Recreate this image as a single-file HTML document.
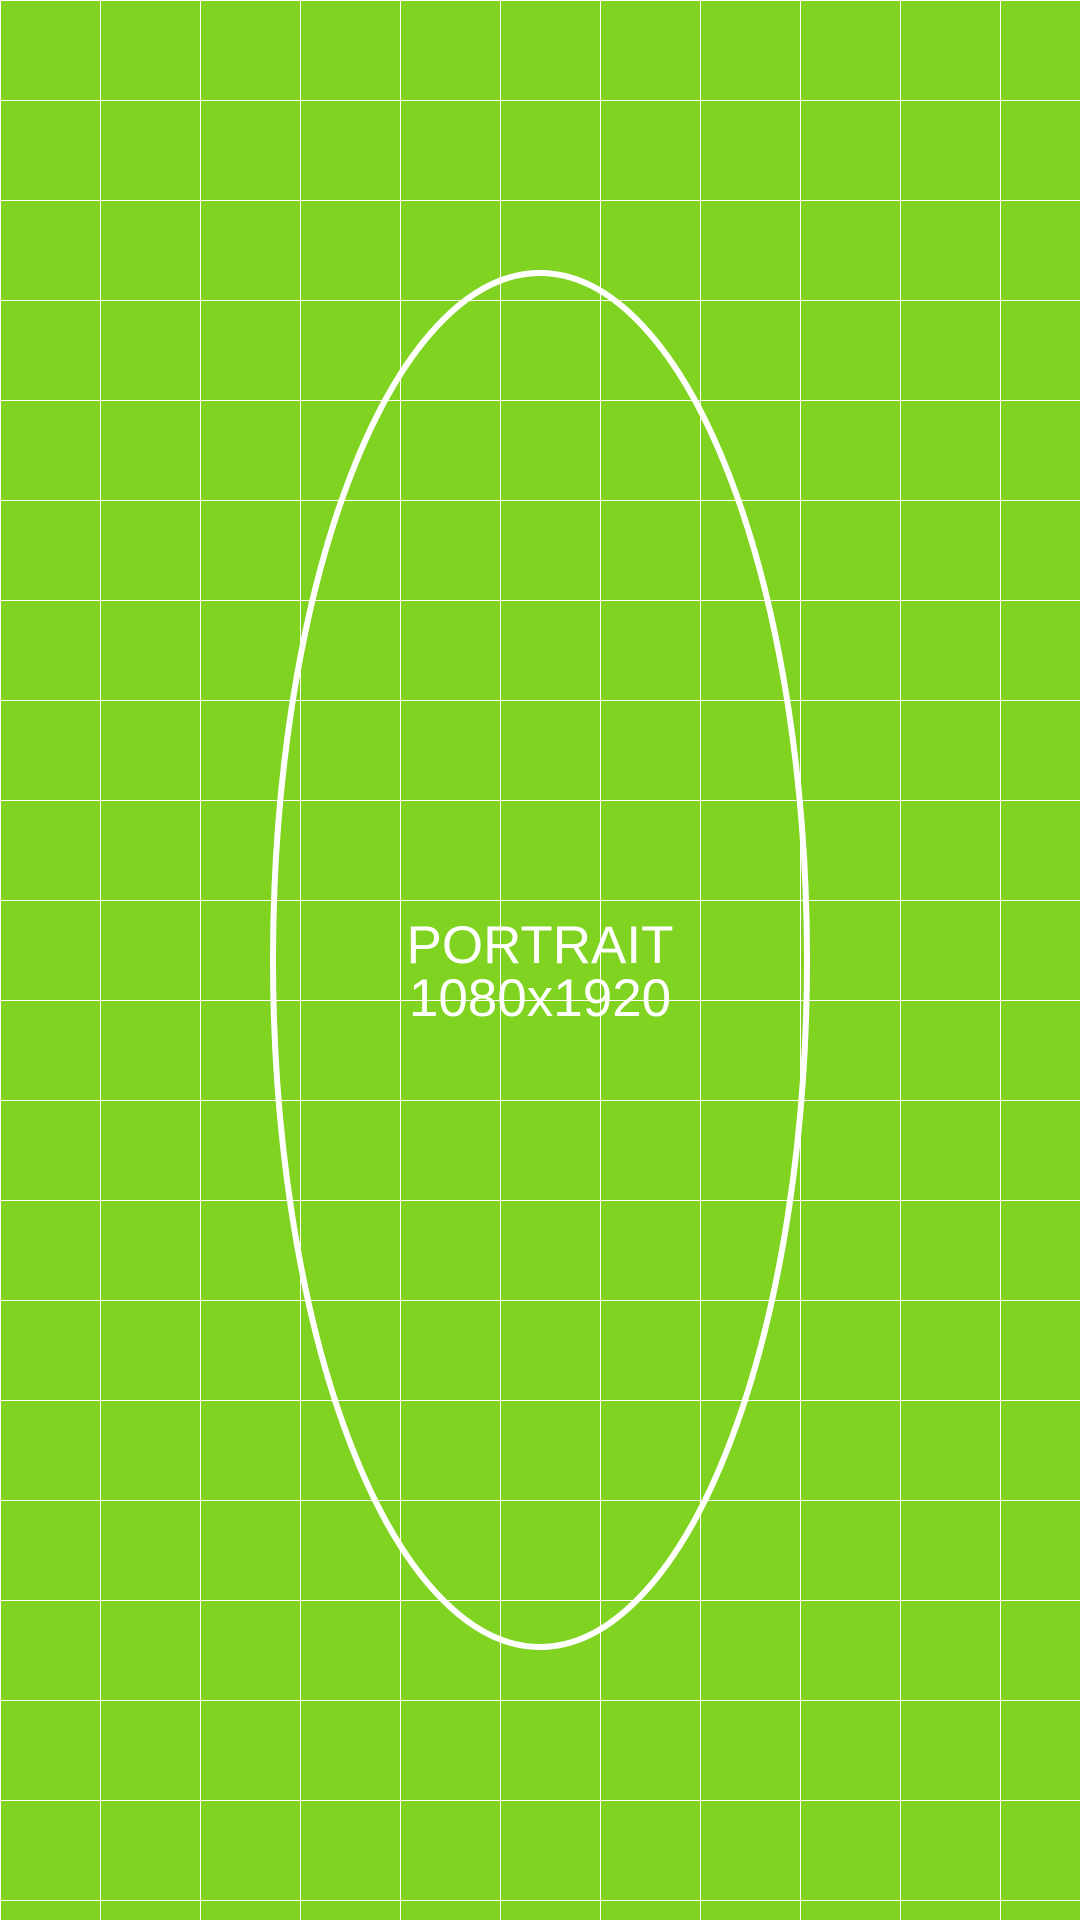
<!DOCTYPE html>
<html><head><style>
html,body{margin:0;padding:0;width:1080px;height:1920px;overflow:hidden;background:#80d321;}
.t{position:absolute;left:0;width:1080px;text-align:center;color:#fff;font-family:"Liberation Sans",Arial,sans-serif;font-size:53px;line-height:54px;white-space:nowrap;}
</style></head><body>
<svg width="1080" height="1920" xmlns="http://www.w3.org/2000/svg" style="position:absolute;left:0;top:0">
<rect width="1080" height="1920" fill="#80d321"/>
<g stroke="#ffffff" stroke-width="1" shape-rendering="crispEdges">
<line x1="0.5" y1="0" x2="0.5" y2="1920"/>
<line x1="100.5" y1="0" x2="100.5" y2="1920"/>
<line x1="200.5" y1="0" x2="200.5" y2="1920"/>
<line x1="300.5" y1="0" x2="300.5" y2="1920"/>
<line x1="400.5" y1="0" x2="400.5" y2="1920"/>
<line x1="500.5" y1="0" x2="500.5" y2="1920"/>
<line x1="600.5" y1="0" x2="600.5" y2="1920"/>
<line x1="700.5" y1="0" x2="700.5" y2="1920"/>
<line x1="800.5" y1="0" x2="800.5" y2="1920"/>
<line x1="900.5" y1="0" x2="900.5" y2="1920"/>
<line x1="1000.5" y1="0" x2="1000.5" y2="1920"/>
<line x1="0" y1="0.5" x2="1080" y2="0.5"/>
<line x1="0" y1="100.5" x2="1080" y2="100.5"/>
<line x1="0" y1="200.5" x2="1080" y2="200.5"/>
<line x1="0" y1="300.5" x2="1080" y2="300.5"/>
<line x1="0" y1="400.5" x2="1080" y2="400.5"/>
<line x1="0" y1="500.5" x2="1080" y2="500.5"/>
<line x1="0" y1="600.5" x2="1080" y2="600.5"/>
<line x1="0" y1="700.5" x2="1080" y2="700.5"/>
<line x1="0" y1="800.5" x2="1080" y2="800.5"/>
<line x1="0" y1="900.5" x2="1080" y2="900.5"/>
<line x1="0" y1="1000.5" x2="1080" y2="1000.5"/>
<line x1="0" y1="1100.5" x2="1080" y2="1100.5"/>
<line x1="0" y1="1200.5" x2="1080" y2="1200.5"/>
<line x1="0" y1="1300.5" x2="1080" y2="1300.5"/>
<line x1="0" y1="1400.5" x2="1080" y2="1400.5"/>
<line x1="0" y1="1500.5" x2="1080" y2="1500.5"/>
<line x1="0" y1="1600.5" x2="1080" y2="1600.5"/>
<line x1="0" y1="1700.5" x2="1080" y2="1700.5"/>
<line x1="0" y1="1800.5" x2="1080" y2="1800.5"/>
<line x1="0" y1="1900.5" x2="1080" y2="1900.5"/>
</g>
<ellipse cx="540" cy="960" rx="267" ry="687" fill="none" stroke="#ffffff" stroke-width="6"/>
</svg>
<div class="t" style="top:919px">PORTRAIT</div>
<div class="t" style="top:972px">1080x1920</div>
</body></html>
